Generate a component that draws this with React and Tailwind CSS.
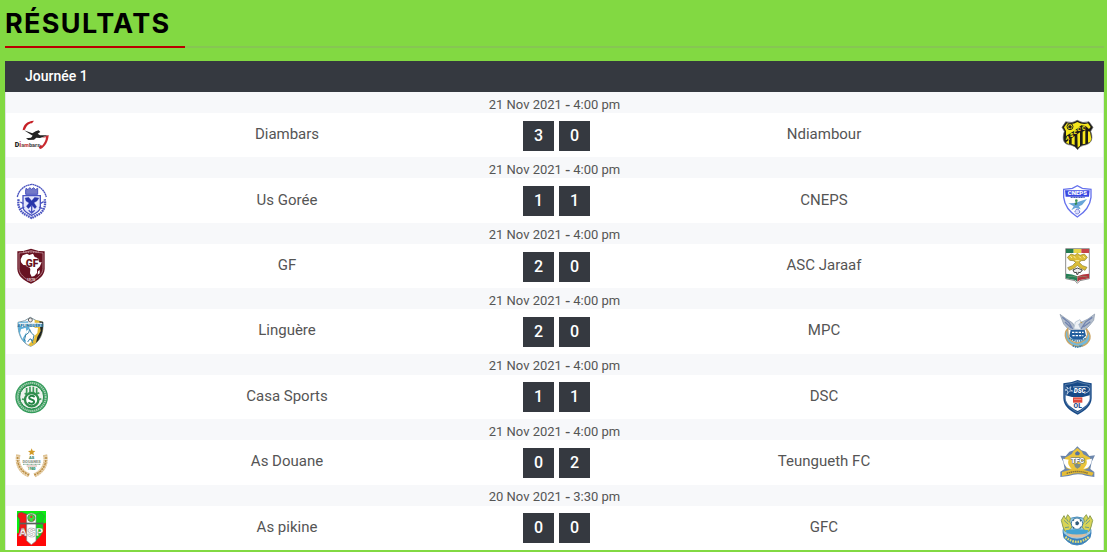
import React from "react";

function Crest({ label, children }) {
  return (
    <svg viewBox="0 0 102 108" role="img" aria-label={label} className="h-9 w-[34px] overflow-visible">
      {children}
    </svg>
  );
}

const svgText = { fontFamily: "Roboto, sans-serif", fontWeight: 900, textAnchor: "middle" };

const crests = {
  Diambars: (
    <>
      <path d="M26 40C28 24 38 12 60 11L54 19C44 19 38 26 33 38Z" fill="#c62026" />
      <path d="M104 54C103 72 95 88 80 96L74 93L80 83L84 86C91 79 95 71 96 61L83 62Z" fill="#c9292f" />
      <path d="M30 40L55 49L65 43L74 40L79 45L71 50L78 55L102 55L78 63L67 62L60 68L43 69L36 64L51 62L56 56Z" fill="#222" />
      <text x="2" y="89" fontSize="21" fontFamily="Roboto, sans-serif" fontWeight="900" fill="#222">D<tspan fill="#c44">i</tspan><tspan fontSize="18" fill="#766">a</tspan><tspan fontSize="16" fill="#c44">m</tspan><tspan fontSize="17" fill="#555">bars</tspan></text>
    </>
  ),
  "Us Gorée": (
    <g stroke="#4a54c0" fill="none">
      <path d="M10 42C14 22 29 8 53 4C77 8 91 21 97 42" strokeWidth="4" strokeDasharray="6 1" />
      <path d="M14 49C10 68 18 83 29 92L53 105L78 92C90 82 96 67 92 49" strokeWidth="7" strokeDasharray="5 2" />
      <path d="M36 21V16L42 20L47 14L53 19L59 14L64 20L71 16V34H35V20" fill="#7379c8" strokeWidth="3" />
      <path d="M27 38H79V74C77 85 67 91 53 97C39 91 29 85 27 74Z" fill="#e6e8fb" strokeWidth="4" />
      <path d="M33 45L44 43L53 53L62 43L75 45L69 54L60 59L68 71L63 77L53 67L43 77L37 70L45 60L36 54Z" fill="#2734a9" strokeWidth="1" />
      <path d="M53 66V90M44 82L53 90L62 82M19 57L28 62M80 61L89 56M21 77L31 72M75 72L86 77" strokeWidth="4" />
    </g>
  ),
  GF: (
    <>
      <path d="M51 2Q72 10 92 10V63C91 84 72 98 51 107C29 98 11 84 10 63V10Q30 10 51 2Z" fill="#671221" />
      <path d="M51 8Q70 15 87 15V62C86 79 70 91 51 101C31 91 16 79 15 62V15Q34 15 51 8Z" fill="none" stroke="#cba7ae" strokeWidth="2" />
      <path d="M26 22L39 17L46 21L57 17L62 27L69 29L76 43H83L77 56L69 64V75L61 84L53 86L48 76L49 63L43 52L28 51L21 43L20 34Z" fill="#fff" />
      <text {...svgText} x="54" y="58" fontSize="31" fill="#671221" stroke="#fff" strokeWidth="2" paintOrder="stroke">GF</text>
      <path d="M27 12H74" stroke="#c3909a" strokeWidth="4" strokeDasharray="3 2" />
      <path d="M72 70L77 66V76L71 80Z" fill="#fff" />
      <text {...svgText} x="51" y="99" fontSize="11" fill="#e2ccd0">1970</text>
    </>
  ),
  Linguère: (
    <>
      <path d="M12 28Q33 26 49 13Q66 26 87 27C89 62 78 88 50 100C23 90 11 64 12 28Z" fill="#fff" stroke="#8099a4" strokeWidth="3" />
      <path d="M62 20L87 27C89 61 78 87 51 100L43 95L61 76Z" fill="#e5bc36" />
      <path d="M76 25L87 27C89 57 79 78 66 90L70 72L80 54Z" fill="#1e2528" />
      <path d="M12 28L42 25L47 47L37 54L35 91C18 77 11 55 12 28Z" fill="#5eafd8" />
      <path d="M21 49L35 44L38 56L25 78L18 60ZM29 77L48 53L59 74L48 89ZM53 45L72 44L70 60L62 68Z" fill="#fff" />
      <path d="M31 83L35 66L44 59L47 49L52 60L60 67L56 84L48 77L41 87M51 78L57 91" fill="none" stroke="#3b81a4" strokeWidth="3" />
      <path d="M14 29H85V42H15Z" fill="#e2edf2" />
      <text {...svgText} x="49" y="41" fontSize="13" fill="#126c9e">AFLINGUÈRE</text>
      <circle cx="49" cy="21" r="6" fill="#eee" stroke="#666" strokeWidth="3" />
    </>
  ),
  "Casa Sports": (
    <>
      <circle cx="53" cy="54" r="49" fill="#349c5b" />
      <circle cx="53" cy="54" r="42" fill="none" stroke="#a5cfb2" strokeWidth="6" strokeDasharray="4 2" />
      <circle cx="53" cy="54" r="36" fill="#edf2ed" stroke="#248748" strokeWidth="3" />
      <path d="M38 27V44M48 23V42M58 23V42M68 27V44M32 43L39 47M66 46L76 41M24 60L32 62M73 62L82 59" stroke="#3c9b59" strokeWidth="5" />
      <circle cx="53" cy="62" r="20" fill="#fff" stroke="#308d4d" strokeWidth="7" />
      <path d="M62 54C51 46 41 54 48 60L58 64C66 71 52 79 43 70" fill="none" stroke="#238444" strokeWidth="6" />
    </>
  ),
  "As Douane": (
    <>
      <path d="M13 32C7 60 19 83 45 94M93 32C100 60 86 83 61 94" fill="none" stroke="#dfc394" strokeWidth="13" strokeDasharray="6 1" />
      <path d="M11 39C9 64 22 84 48 94M96 39C97 65 83 85 58 94" fill="none" stroke="#b98b41" strokeWidth="4" strokeDasharray="6 3" />
      <path d="M53 13L56 20L64 21L58 26L60 34L53 30L46 34L48 26L42 21L50 20Z" fill="#d29a27" />
      <text {...svgText} x="53" y="46" fontSize="12" fill="#368267">AS</text>
      <text {...svgText} x="53" y="56" fontSize="12" fill="#8b9788">DOUANES</text>
      <path d="M27 61H80" stroke="#7ba48c" strokeWidth="3" strokeDasharray="3 1" />
      <path d="M38 66H69" stroke="#d2a9a0" strokeWidth="3" />
      <text {...svgText} x="53" y="78" fontSize="10" fill="#238554">1980</text>
    </>
  ),
  "As pikine": (
    <>
      <path d="M9 3H96V108H9Z" fill="#ff0808" />
      <path d="M9 3H96V38L62 50H16L14 70H9Z" fill="#08f010" />
      <path d="M13 10L22 7L39 13V85L24 72L17 52V28L11 19Z" fill="#f11716" stroke="#595a50" strokeWidth="2" />
      <path d="M65 13L82 7L92 18L87 31V58C84 73 76 84 65 91Z" fill="#09d916" stroke="#4f8150" strokeWidth="2" />
      <path d="M38 15Q52 4 66 15V93L52 104L38 92Z" fill="#fff" stroke="#858585" strokeWidth="2" />
      <circle cx="52" cy="24" r="11" fill="#38dd42" stroke="#497b46" strokeWidth="2" />
      <path d="M48 20L52 16L56 20L54 24H50ZM44 27L48 29L45 33ZM56 29L60 27V33Z" fill="#d33c2c" />
      <path d="M18 38H88V43H18Z" fill="#57625b" />
      <text {...svgText} x="27" y="78" fontSize="35" fill="#fff" stroke="#985858" strokeWidth="1">A</text>
      <text {...svgText} x="52" y="81" fontSize="40" fill="#fff" stroke="#aaa" strokeWidth="2">S</text>
      <text {...svgText} x="77" y="78" fontSize="35" fill="#fff" stroke="#318a34" strokeWidth="1">P</text>
    </>
  ),
  Ndiambour: (
    <>
      <path d="M14 14Q34 21 49 10Q65 21 84 14L96 31L89 43C101 75 82 83 67 85Q56 87 50 98Q43 87 30 84C8 83 2 69 10 43L3 31Z" fill="#1c1b18" stroke="#666" strokeWidth="2" />
      <path d="M18 19Q35 24 49 15Q65 24 81 19L89 30L84 36L74 27L61 25L42 40L15 57V42L9 31Z" fill="#f6e71c" />
      <path d="M15 76L24 68V81L18 79ZM32 64L41 57V84L32 81ZM49 52L57 46V86L50 92ZM65 44L73 40V80L65 82ZM81 43L87 44L91 65L88 74L81 77Z" fill="#f6e71c" />
      <circle cx="27" cy="29" r="9" fill="#f6e71c" stroke="#26251e" strokeWidth="3" />
      <path d="M22 26L28 24L33 29L29 35L22 32Z" fill="#26251e" />
      <g fill="#f6e71c" fontSize="16" style={{ fontFamily: "Roboto, sans-serif", fontWeight: 900 }}><text x="14" y="70">A</text><text x="27" y="60">S</text><text x="38" y="51">E</text><text x="49" y="43">C</text><text x="63" y="39">C</text></g>
    </>
  ),
  CNEPS: (
    <>
      <path d="M8 19L34 16L49 8L64 16L90 19V43C87 70 71 88 49 102C27 88 11 70 8 43Z" fill="#fff" stroke="#6672ed" strokeWidth="4" />
      <path d="M12 22H86L84 41H14Z" fill="#3947e2" />
      <text {...svgText} x="49" y="36" fontSize="18" fill="#fff">CNEPS</text>
      <path d="M29 43H71" stroke="#4d5fbb" strokeWidth="4" strokeDasharray="4 1" />
      <path d="M22 61L43 60L57 55L78 48L63 66L54 70L59 79L43 75L31 82L38 70Z" fill="#68a5d8" />
      <circle cx="46" cy="53" r="4" fill="#3e9654" /><path d="M41 59L48 57L49 64L42 67Z" fill="#318959" />
      <circle cx="49" cy="86" r="7" fill="#d9ddff" stroke="#5962c7" strokeWidth="3" strokeDasharray="4 2" />
    </>
  ),
  "ASC Jaraaf": (
    <>
      <path d="M14 2H85V92L57 98L49 106L42 98L14 92Z" fill="#fff" stroke="#555" strokeWidth="2" />
      <path d="M15 3H38V15H15Z" fill="#237b50" /><path d="M38 3H61V15H38Z" fill="#e6d648" /><path d="M61 3H84V15H61Z" fill="#c64348" />
      <path d="M15 77Q34 77 49 85V101L42 96L15 91Z" fill="#247f56" /><path d="M84 77Q65 77 49 85V101L57 96L84 91Z" fill="#b3343c" />
      <path d="M30 18L42 22L49 16L57 22L70 18L79 28L72 37L61 38L54 43L65 53L78 58L72 67L58 60L49 52L40 61L25 67L20 59L34 53L44 43L37 38L26 37L19 28Z" fill="#dabc35" stroke="#8a7f32" strokeWidth="2" />
      <path d="M28 24L33 30M38 24L44 31M54 25L60 31M67 24L71 30M43 38H55" stroke="#fff0a0" strokeWidth="3" />
      <path d="M36 66L49 60L64 66L58 74L52 73L51 79H47V73L40 74Z" fill="#eee" stroke="#444" strokeWidth="3" />
      <path d="M20 87Q35 82 49 88Q64 82 79 87" fill="none" stroke="#82a078" strokeWidth="2" />
    </>
  ),
  MPC: (
    <>
      <path d="M-3 4L15 17L35 30L45 48L56 30L81 18L101 3L98 22L86 37L74 49L56 55H38L20 47L8 33Z" fill="#b3bdcc" stroke="#8795a8" strokeWidth="2" />
      <path d="M4 13L24 29L35 48M12 27L31 45M94 13L74 27L60 48M88 26L67 42" fill="none" stroke="#7184af" strokeWidth="4" />
      <path d="M38 48L43 27L57 20L62 28L53 34L60 50Z" fill="#edf1f5" stroke="#a5b7c8" strokeWidth="2" /><path d="M58 25L65 30L59 31Z" fill="#b79245" />
      <path d="M20 47C6 62 13 94 43 99C75 105 93 82 85 61L76 47L80 64C76 81 68 88 49 90C27 87 19 77 21 59Z" fill="#72b9db" stroke="#cba566" strokeWidth="4" />
      <path d="M29 51H71L75 68L62 80H37L25 70Z" fill="#225f9e" /><path d="M33 58H68M34 68H67" stroke="#fff" strokeWidth="4" strokeDasharray="7 3" />
      <path d="M24 75L42 84H59L76 75M35 98L48 103L64 98" fill="none" stroke="#367da9" strokeWidth="5" strokeDasharray="5 2" />
    </>
  ),
  DSC: (
    <>
      <path d="M7 13L32 9L50 3L69 9L92 13V58C91 80 75 94 50 107C23 94 8 80 7 58Z" fill="#174a87" />
      <path d="M12 17L35 13L50 8L66 13L87 17V57C85 76 72 89 50 101C27 89 14 76 12 57Z" fill="none" stroke="#ced8e4" strokeWidth="1" />
      <path d="M14 49L33 54H66L86 49V59C83 75 71 84 50 96C28 84 16 75 14 59Z" fill="#fff" />
      <path d="M17 24L23 29L30 23L27 32L35 36H25L18 46L20 35L12 33L20 30ZM36 24L76 22Q91 28 82 38L70 44" fill="none" stroke="#e8f2fa" strokeWidth="2" />
      <text {...svgText} x="56" y="41" fontSize="19" fontStyle="italic" fill="#fff">DSC</text>
      <path d="M36 55H64V71H36Z" fill="#df493b" /><path d="M39 61H61" stroke="#f4c3bd" strokeWidth="2" />
      <text {...svgText} x="50" y="88" fontSize="20" fill="#294d89">OL</text>
    </>
  ),
  "Teungueth FC": (
    <>
      <path d="M-2 35L14 36L25 23L38 19L49 7L61 19L75 23L85 36L102 34L92 54L88 75L100 84V99L75 95Q50 86 23 96L-2 99V83L11 75L7 54Z" fill="#6c86ac" />
      <path d="M11 42L32 30L37 22L49 12L62 22L67 31L88 42L82 73L65 79H33L16 73Z" fill="#eac43b" />
      <path d="M6 44C8 63 17 75 32 74C23 65 19 57 23 47ZM93 44C91 63 82 75 67 74C76 65 80 57 76 47Z" fill="#fff" />
      <path d="M42 27L49 21L57 27L54 34L44 34Z" fill="#58749e" />
      <text {...svgText} x="50" y="56" fontSize="22" fill="#fff" stroke="#516f95" strokeWidth="3" paintOrder="stroke">TFC</text>
      <path d="M39 60H60L57 69L49 74L42 69Z" fill="#7c8c87" />
      <path d="M3 84L23 79Q50 72 78 80L98 86L93 95L74 91Q50 84 25 92L3 96Z" fill="#e6bd35" />
      <path d="M17 88Q49 77 82 88" fill="none" stroke="#756840" strokeWidth="4" strokeDasharray="4 2" />
    </>
  ),
  GFC: (
    <>
      <circle cx="48" cy="63" r="42" fill="#9acbe5" stroke="#4d91be" strokeWidth="3" />
      <path d="M6 51L1 31L9 17L14 27L20 14L28 24L26 36L34 48L25 62L12 64ZM90 51L95 31L87 17L82 27L76 14L68 24L70 36L62 48L71 62L84 64Z" fill="#d8d456" stroke="#8fa052" strokeWidth="3" />
      <path d="M9 31L22 43M16 26L22 35M87 31L74 43M80 26L74 35M12 53L24 51M84 53L72 51" stroke="#6d9b86" strokeWidth="3" />
      <circle cx="48" cy="41" r="17" fill="#fff" stroke="#417da4" strokeWidth="3" />
      <path d="M43 37L49 33L55 39L51 46L44 45ZM35 31L40 27L39 34ZM56 27L62 33L57 35ZM35 49L41 53L37 56ZM56 52L61 49L57 56Z" fill="#315c7c" />
      <path d="M14 61Q47 54 82 61L77 73Q47 80 18 72Z" fill="#43a3d3" /><path d="M18 70Q47 77 79 70L73 78Q47 87 22 78Z" fill="#ddbd9d" />
      <path d="M5 67L18 77Q48 96 78 77L92 67L88 84L73 97Q48 113 23 97L8 84Z" fill="#3b80bb" />
      <path d="M13 81Q47 110 84 81" fill="none" stroke="#e2dd72" strokeWidth="7" strokeDasharray="5 3" />
    </>
  ),
};

const matches = [
  ["Diambars", 3, 0, "Ndiambour", "21 Nov 2021", "4:00 pm"],
  ["Us Gorée", 1, 1, "CNEPS", "21 Nov 2021", "4:00 pm"],
  ["GF", 2, 0, "ASC Jaraaf", "21 Nov 2021", "4:00 pm"],
  ["Linguère", 2, 0, "MPC", "21 Nov 2021", "4:00 pm"],
  ["Casa Sports", 1, 1, "DSC", "21 Nov 2021", "4:00 pm"],
  ["As Douane", 0, 2, "Teungueth FC", "21 Nov 2021", "4:00 pm"],
  ["As pikine", 0, 0, "GFC", "20 Nov 2021", "3:30 pm"],
];

function Score({ value }) {
  return (
    <span className="flex h-[30px] w-[31px] items-center justify-center bg-[#353940] text-base font-medium text-white">
      {value}
    </span>
  );
}

function Match({ match }) {
  const [home, homeScore, awayScore, away, date, time] = match;
  return (
    <li className="flex flex-col">
      <div className="flex h-[21px] items-center justify-center gap-[3px] bg-[#f7f8fa] pt-1 text-[13px] leading-4 text-[#555]">
        <time>{date}</time>
        <span className="font-['Liberation_Sans',sans-serif] text-base leading-4">-</span>
        <time>{time}</time>
      </div>
      <div className="grid flex-1 grid-cols-[52px_minmax(0,1fr)_79px_minmax(0,1fr)_50px] items-center bg-white text-center text-[15px] leading-5 text-[#555]">
        <div className="pl-2"><Crest label={home}>{crests[home]}</Crest></div>
        <span className="pb-0.5">{home}</span>
        <div className="flex justify-center gap-[5px] pt-px pl-0.5">
          <Score value={homeScore} />
          <Score value={awayScore} />
        </div>
        <span className="pb-0.5">{away}</span>
        <div className="pl-2"><Crest label={away}>{crests[away]}</Crest></div>
      </div>
    </li>
  );
}

export default function App() {
  return (
    <main className="flex min-h-screen flex-col bg-[#82d942] pr-[3px] pb-0.5 pl-[5px] font-['Roboto',sans-serif]">
      <header className="mb-[13px] flex border-b-2 border-[#86c653]">
        <h1 className="-mb-0.5 border-b-2 border-[#b90000] pt-[5px] pr-3.5 pb-[3px] font-['Inter',sans-serif] text-[27px] leading-[38px] font-bold tracking-wider text-black">
          RÉSULTATS
        </h1>
      </header>
      <section className="flex flex-1 flex-col">
        <h2 className="bg-[#353940] px-5 pt-1 pb-1 text-sm leading-[23px] font-medium text-white">Journée 1</h2>
        <ul className="grid flex-1 auto-rows-fr border-x border-[#e1e3e6]">
          {matches.map((match) => <Match key={match[0]} match={match} />)}
        </ul>
      </section>
    </main>
  );
}
